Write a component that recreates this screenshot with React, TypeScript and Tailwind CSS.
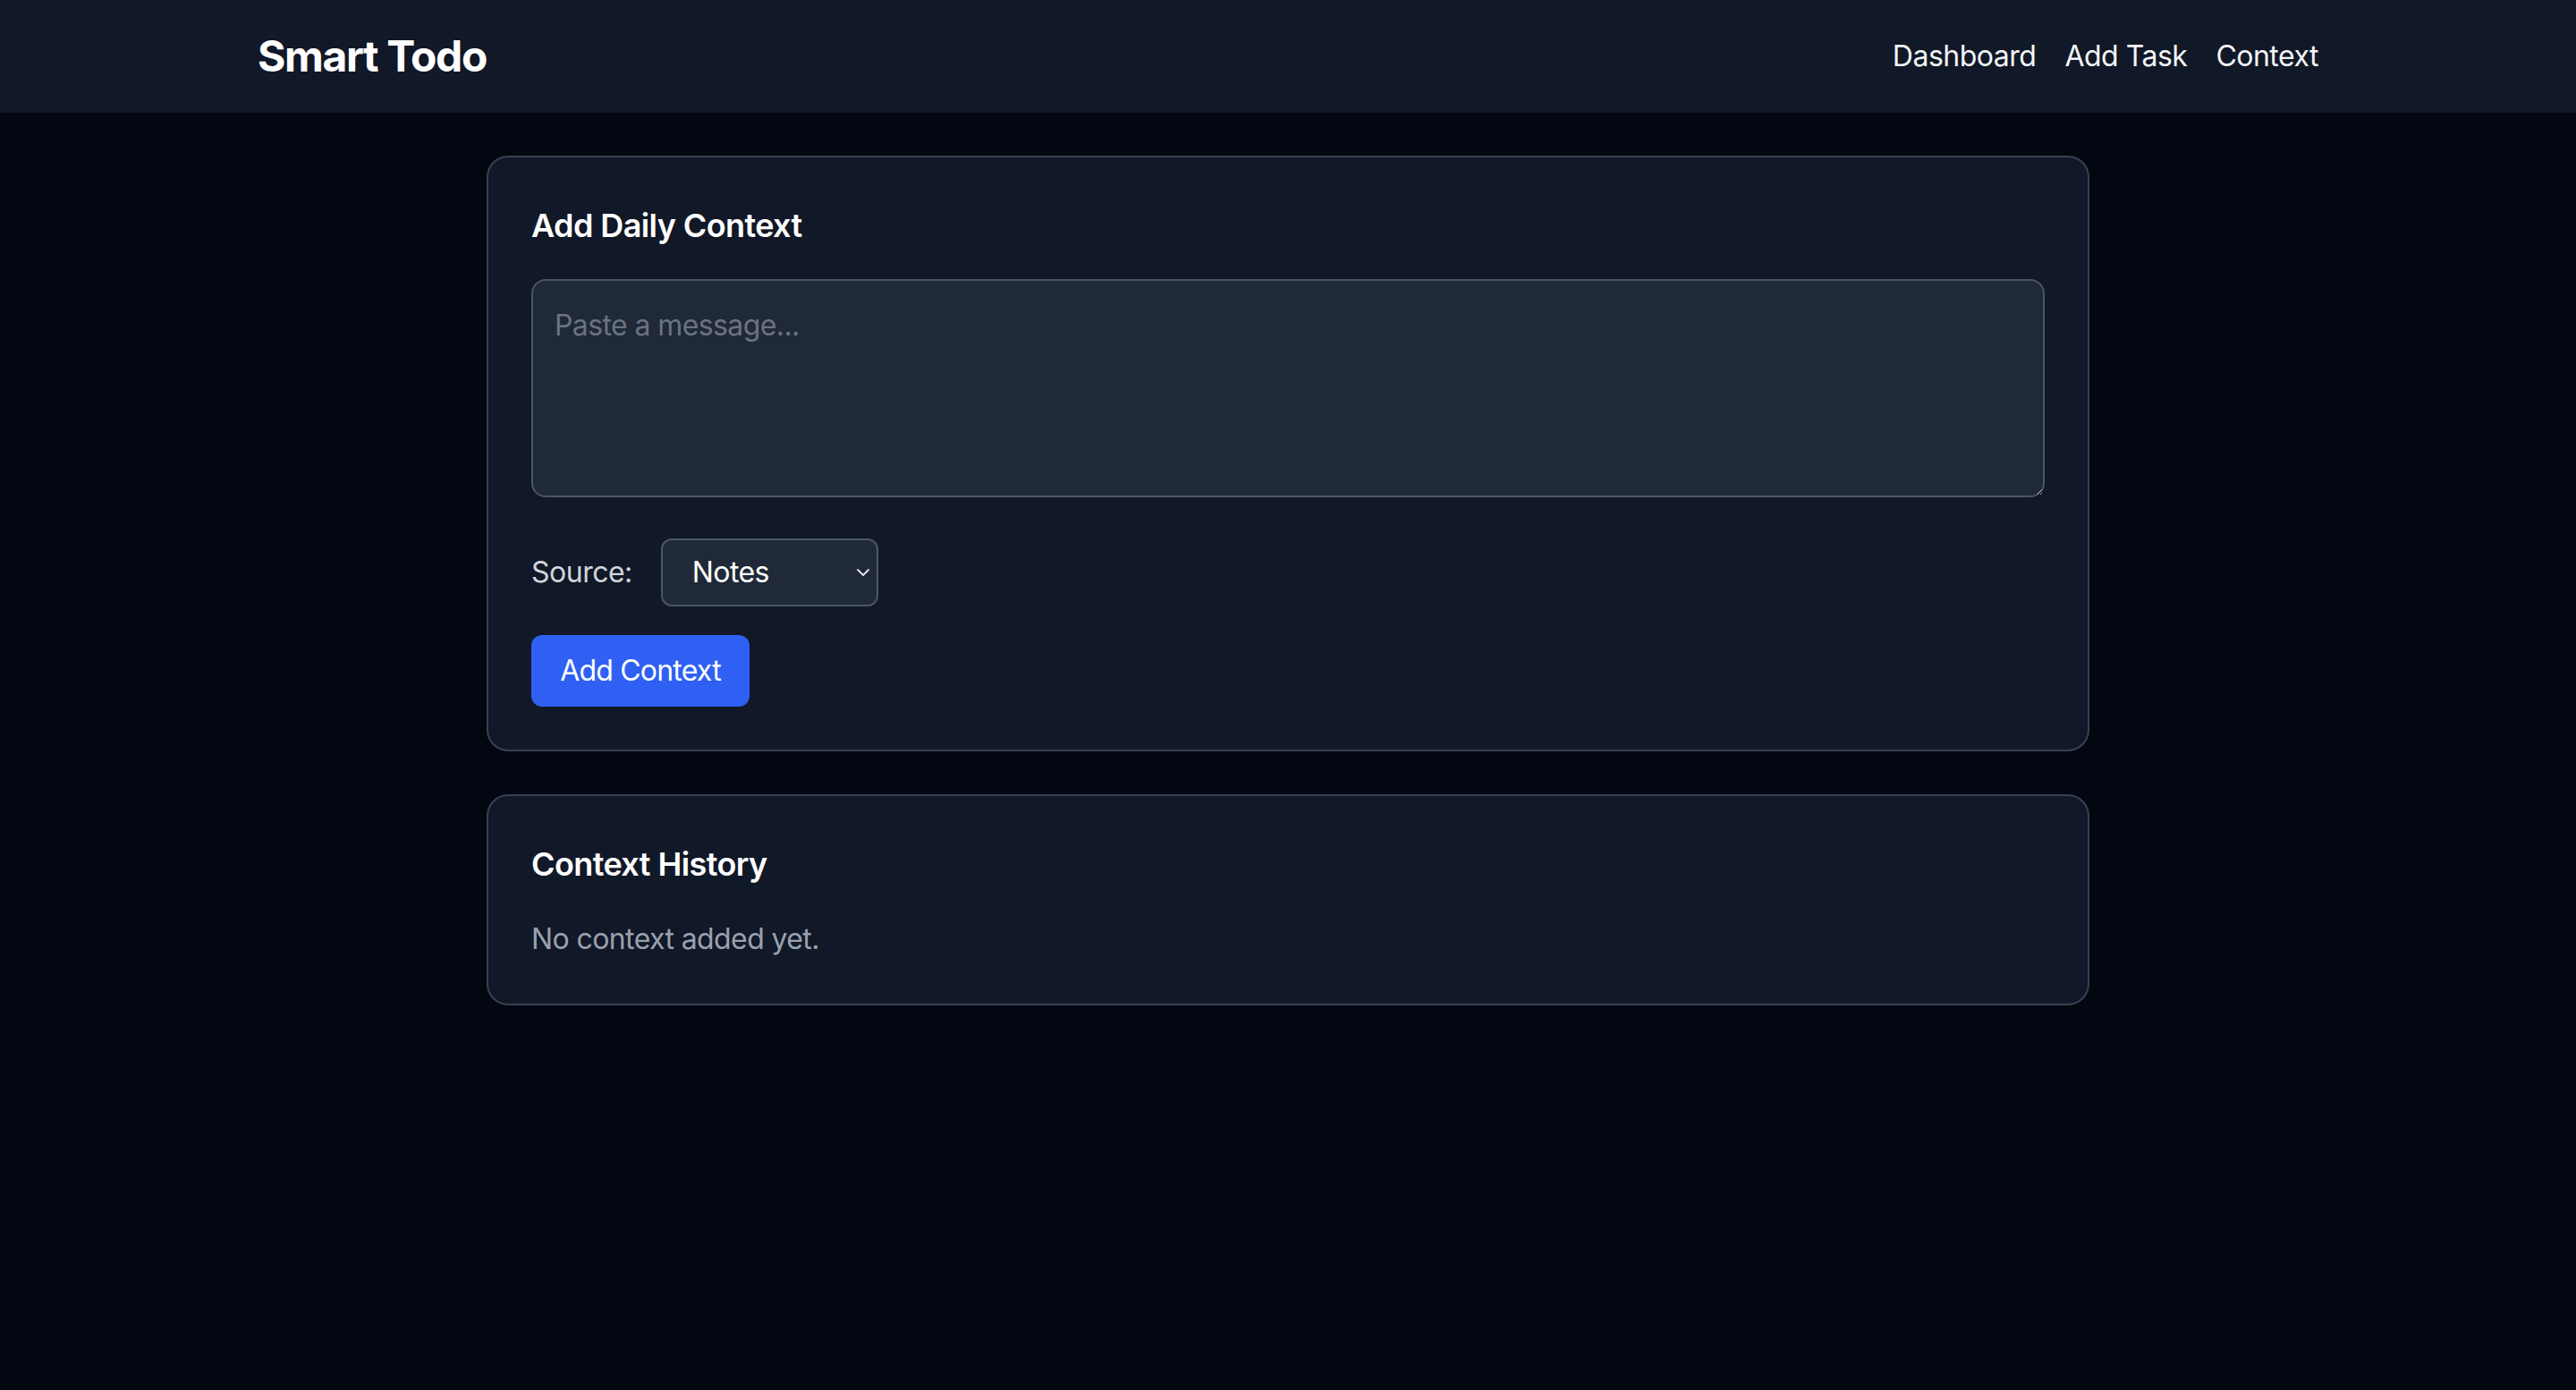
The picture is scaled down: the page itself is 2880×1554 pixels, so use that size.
import React, { useState } from 'react';

export default function App() {
  const [message, setMessage] = useState('');
  const [source, setSource] = useState('Notes');

  return (
    <div className="min-h-screen bg-[#030712] text-white" style={{ fontFamily: 'Inter, "Noto Sans", sans-serif' }}>
      {/* Top bar */}
      <header className="h-[126px] bg-[#111827]">
        <div className="w-[2304px] mx-auto h-full flex items-center justify-between">
          <h1 className="text-[48px] leading-[64px] font-bold tracking-[-1.4px]">Smart Todo</h1>
          <nav className="flex items-center gap-[32px] text-[32px] leading-[48px] tracking-[-0.5px] text-gray-100">
            <a href="#">Dashboard</a>
            <a href="#">Add Task</a>
            <a href="#">Context</a>
          </nav>
        </div>
      </header>

      <main className="w-[1792px] mx-auto pt-[48px] flex flex-col gap-[48px]">
        {/* Add context card */}
        <section className="bg-[#111827] border-2 border-[#374151] rounded-[24px] p-[48px]">
          <h2 className="text-[36px] leading-[56px] font-semibold tracking-[-0.6px] mb-[32px]">Add Daily Context</h2>
          <textarea
            value={message}
            onChange={(e) => setMessage(e.target.value)}
            placeholder="Paste a message..."
            className="block w-full h-[244px] bg-[#1f2937] border-2 border-[#4b5563] rounded-[16px] px-[24px] pt-[26px] pb-[24px] text-[32px] leading-[48px] tracking-[-0.6px] text-white placeholder:text-[#6b7280] focus:outline-none"
          />
          <div className="flex items-center gap-[32px] mt-[46px]">
            <label className="text-[32px] leading-[48px] tracking-[-0.5px] text-gray-300">Source:</label>
            <div className="relative">
              <select
                value={source}
                onChange={(e) => setSource(e.target.value)}
                className="appearance-none w-[243px] h-[76px] bg-[#1f2937] border-2 border-[#4b5563] rounded-[12px] pl-[33px] pr-[40px] text-[32px] leading-[48px] tracking-[-0.6px] text-white focus:outline-none"
              >
                <option>Notes</option>
                <option>Email</option>
                <option>Slack</option>
                <option>Meeting</option>
              </select>
              <svg className="absolute right-[9px] top-1/2 -translate-y-1/2 w-[16px] h-[10px] pointer-events-none" viewBox="0 0 16 10" fill="none">
                <path d="M2 2l6 6 6-6" stroke="#e5e7eb" strokeWidth="1.8" strokeLinecap="round" strokeLinejoin="round" />
              </svg>
            </div>
          </div>
          <button className="mt-[32px] h-[80px] w-[244px] bg-[#2f60f3] rounded-[12px] text-[32px] leading-[48px] tracking-[-0.8px] text-white">
            Add Context
          </button>
        </section>

        {/* History card */}
        <section className="bg-[#111827] border-2 border-[#374151] rounded-[24px] p-[48px]">
          <h2 className="text-[36px] leading-[56px] font-semibold tracking-[-0.6px] mb-[32px]">Context History</h2>
          <p className="text-[32px] leading-[48px] tracking-[-0.6px] text-gray-400">No context added yet.</p>
        </section>
      </main>
    </div>
  );
}
